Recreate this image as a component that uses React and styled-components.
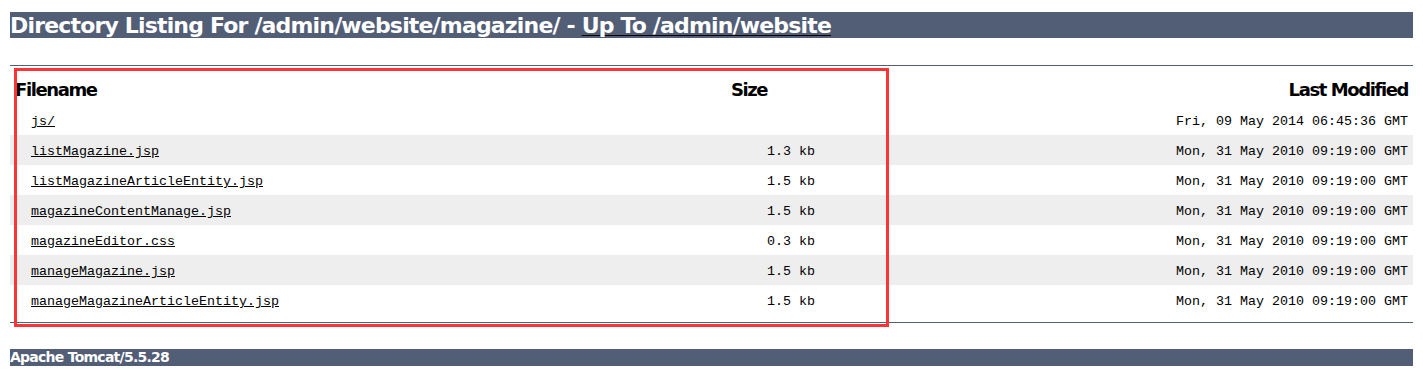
import React from "react";
import styled, { createGlobalStyle } from "styled-components";

const Global = createGlobalStyle`
  html, body { margin: 0; padding: 0; background: #ffffff; }
  body { font-family: "DejaVu Sans", Verdana, sans-serif; }
`;

const Page = styled.div`
  position: relative;
  padding: 12px 10px 14px;
`;

const Title = styled.h1`
  margin: 0;
  height: 26px;
  line-height: 27px;
  background: #525d76;
  color: #ffffff;
  font-family: "DejaVu Sans", Verdana, sans-serif;
  font-weight: bold;
  font-size: 22px;
  letter-spacing: -0.83px;
  white-space: nowrap;
  overflow: hidden;
`;

const UpLink = styled.a`
  color: #ffffff;
  text-decoration: underline;
  text-decoration-color: #000000;
  text-decoration-thickness: 1px;
  text-underline-offset: 2px;
`;

const Rule = styled.div`
  height: 1px;
  background: #525d76;
  margin-top: ${(p) => p.$top}px;
`;

const Table = styled.table`
  width: 100%;
  border-spacing: 0;
  border-collapse: collapse;
  margin-top: 8px;
  table-layout: fixed;
`;

const HeadCell = styled.th`
  height: 31px;
  padding: 0 5px;
  text-align: ${(p) => p.$align};
  font-family: "DejaVu Sans", Verdana, sans-serif;
  font-weight: bold;
  font-size: 18px;
  letter-spacing: -1.4px;
  color: #000000;
  vertical-align: middle;
`;

const Row = styled.tr`
  height: 30px;
  background: ${(p) => (p.$striped ? "#eeeeee" : "#ffffff")};
`;

const Cell = styled.td`
  padding: 3px 5px 0;
  text-align: ${(p) => p.$align};
  font-family: "Liberation Mono", "Courier New", monospace;
  font-size: 13.33px;
  color: #000000;
  white-space: pre;
  vertical-align: middle;
`;

const FileLink = styled.a`
  color: #000000;
  text-decoration: underline;
  text-underline-offset: 1px;
`;

const Footer = styled.h3`
  margin: 26px 0 0;
  height: 17px;
  line-height: 17px;
  background: #525d76;
  color: #ffffff;
  font-family: "DejaVu Sans", Verdana, sans-serif;
  font-weight: bold;
  font-size: 14px;
  letter-spacing: -0.75px;
`;

const Highlight = styled.div`
  position: absolute;
  left: 14px;
  top: 68px;
  width: 875px;
  height: 259px;
  box-sizing: border-box;
  border: 3px solid #fb3535;
  pointer-events: none;
`;

const files = [
  { name: "js/", size: "", date: "Fri, 09 May 2014 06:45:36 GMT" },
  { name: "listMagazine.jsp", size: "1.3 kb", date: "Mon, 31 May 2010 09:19:00 GMT" },
  { name: "listMagazineArticleEntity.jsp", size: "1.5 kb", date: "Mon, 31 May 2010 09:19:00 GMT" },
  { name: "magazineContentManage.jsp", size: "1.5 kb", date: "Mon, 31 May 2010 09:19:00 GMT" },
  { name: "magazineEditor.css", size: "0.3 kb", date: "Mon, 31 May 2010 09:19:00 GMT" },
  { name: "manageMagazine.jsp", size: "1.5 kb", date: "Mon, 31 May 2010 09:19:00 GMT" },
  { name: "manageMagazineArticleEntity.jsp", size: "1.5 kb", date: "Mon, 31 May 2010 09:19:00 GMT" },
];

export default function App() {
  return (
    <>
      <Global />
      <Page>
        <Title>
          Directory Listing For /admin/website/magazine/ - <UpLink href="#">Up To /admin/website</UpLink>
        </Title>
        <Rule $top={27} />
        <Table>
          <colgroup>
            <col style={{ width: "652px" }} />
            <col style={{ width: "174px" }} />
            <col />
          </colgroup>
          <thead>
            <tr>
              <HeadCell $align="left">Filename</HeadCell>
              <HeadCell $align="center">Size</HeadCell>
              <HeadCell $align="right">Last Modified</HeadCell>
            </tr>
          </thead>
          <tbody>
            {files.map((f, i) => (
              <Row key={f.name} $striped={i % 2 === 1}>
                <Cell $align="left">
                  {"  "}
                  <FileLink href="#">{f.name}</FileLink>
                </Cell>
                <Cell $align="right">{f.size ? f.size + "  " : ""}</Cell>
                <Cell $align="right">{f.date}</Cell>
              </Row>
            ))}
          </tbody>
        </Table>
        <Rule $top={7} />
        <Footer>Apache Tomcat/5.5.28</Footer>
        <Highlight />
      </Page>
    </>
  );
}
